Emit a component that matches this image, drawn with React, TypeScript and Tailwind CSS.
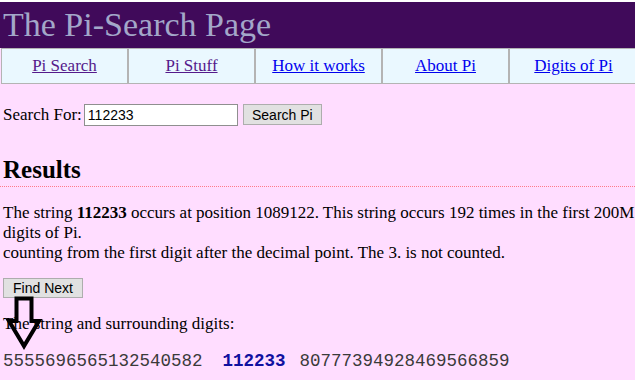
import React from "react";

export default function App() {
  const nav = [
    { t: "Pi Search", v: true },
    { t: "Pi Stuff", v: true },
    { t: "How it works", v: false },
    { t: "About Pi", v: false },
    { t: "Digits of Pi", v: false },
  ];
  return (
    <div className="relative w-[635px] h-[380px] overflow-hidden bg-[#ffddff] text-black font-['Liberation_Serif',serif]">
      <div className="h-[2px] bg-white" />
      <div className="h-[46px] bg-[#400a5a] text-[#a3a7c9] text-[34px] leading-[46px] pl-[3px]">
        The Pi-Search Page
      </div>
      <div className="flex w-[640px] ml-[1px] h-[36px] bg-[#eaf8ff] border border-[#b4b4b4]">
        {nav.map((n, i) => (
          <div
            key={i}
            className={`w-[127px] shrink-0 flex items-center justify-center text-[17px] ${i < 4 ? "border-r-2 border-[#b4b4b4]" : ""}`}
          >
            <a
              href="#"
              className={`underline ${n.v ? "text-[#551a8b]" : "text-[#0000ee]"}`}
            >
              {n.t}
            </a>
          </div>
        ))}
      </div>
      <div className="pl-[3px]">
        <div className="flex items-center mt-[18px] text-[17px]">
          <span>Search For:</span>
          <input
            readOnly
            value="112233"
            className="ml-[2px] w-[154px] h-[22px] bg-white border border-[#8f8f8f] px-[3px] text-[14px] font-['Liberation_Sans',sans-serif] outline-none"
          />
          <button className="ml-[5px] w-[79px] h-[21px] bg-[#e1e1e1] border border-[#adadad] text-[14px] font-['Liberation_Sans',sans-serif] leading-none">
            Search Pi
          </button>
        </div>
      </div>
      <h2 className="mt-[28px] pl-[3px] text-[25px] font-bold leading-[28px] pb-[2px] border-b border-dotted border-[#ff7a8a]">
        Results
      </h2>
      <div className="pl-[3px] text-[17px] leading-[20px] mt-[16px]">
        <p className="whitespace-nowrap">
          The string <b>112233</b> occurs at position 1089122. This string occurs 192 times in the first 200M
          <br />
          digits of Pi.
          <br />
          counting from the first digit after the decimal point. The 3. is not counted.
        </p>
        <button className="mt-[15px] w-[80px] h-[20px] bg-[#e1e1e1] border border-[#adadad] text-[14px] font-['Liberation_Sans',sans-serif] leading-none">
          Find Next
        </button>
        <p className="mt-[16px]">The string and surrounding digits:</p>
        <div className="mt-[17px] font-['Liberation_Mono',monospace] text-[17.5px] leading-[20px] text-[#3a3a3a] whitespace-nowrap">
          <span>5555696565132540582</span>
          <span className="ml-[20px] font-bold text-[#1010a0]">112233</span>
          <span className="ml-[14px]">80777394928469566859</span>
        </div>
      </div>
      <svg className="absolute left-0 top-[290px]" width="50" height="65" viewBox="0 0 50 65">
        <polygon
          points="16.5,8.5 31.5,8.5 31.5,31 39,31 24,56 9,31 16.5,31"
          fill="none"
          stroke="black"
          strokeWidth="4"
          strokeLinejoin="miter"
        />
      </svg>
    </div>
  );
}
